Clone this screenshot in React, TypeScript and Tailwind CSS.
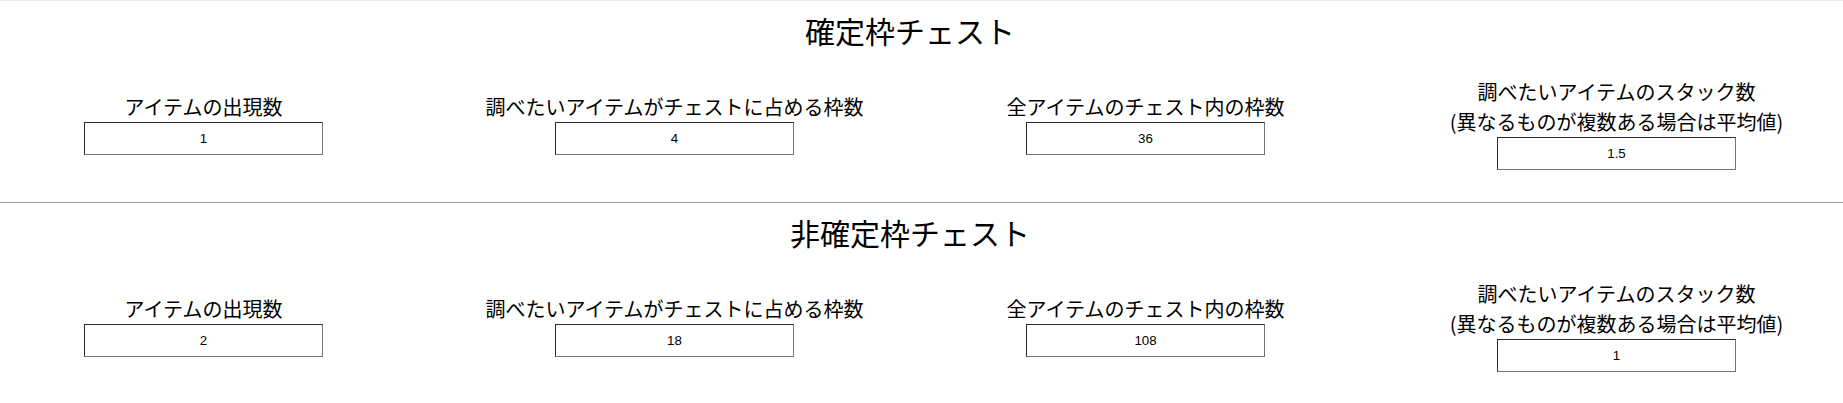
import React from "react";

type Section = { title: string; values: string[]; border: string };

const sections: Section[] = [
  { title: "確定枠チェスト", values: ["1", "4", "36", "1.5"], border: "border-[#ececec]" },
  { title: "非確定枠チェスト", values: ["2", "18", "108", "1"], border: "border-[#a3a3a3]" },
];

const labels: string[][] = [
  ["アイテムの出現数"],
  ["調べたいアイテムがチェストに占める枠数"],
  ["全アイテムのチェスト内の枠数"],
  ["調べたいアイテムのスタック数", "(異なるものが複数ある場合は平均値)"],
];

function Field({ label, value }: { label: string[]; value: string }) {
  return (
    <div className="flex w-[342px] flex-col items-center">
      {label.map((l) => (
        <div key={l} className="whitespace-nowrap text-[20px] leading-[30px] text-black">
          {l}
        </div>
      ))}
      <input
        defaultValue={value}
        className="box-border h-[33px] w-[239px] border border-b-[#767676] border-l-[#2b2b2b] border-r-[#767676] border-t-[#2b2b2b] bg-white text-center font-['Liberation_Sans',Arial,sans-serif] text-[13.33px] text-black outline-none"
      />
    </div>
  );
}

export default function App() {
  return (
    <div className="w-full bg-white font-['Noto_Sans_CJK_JP',sans-serif] text-black">
      {sections.map((s) => (
        <section key={s.title} className={`border-t ${s.border} pr-[23px] pb-[32px]`}>
          <h2 className="mt-[5px] text-center text-[30px] font-normal leading-[48px]">{s.title}</h2>
          <div className="mt-[23px] flex items-center justify-center gap-[129px]">
            {labels.map((l, i) => (
              <Field key={i} label={l} value={s.values[i]} />
            ))}
          </div>
        </section>
      ))}
    </div>
  );
}
